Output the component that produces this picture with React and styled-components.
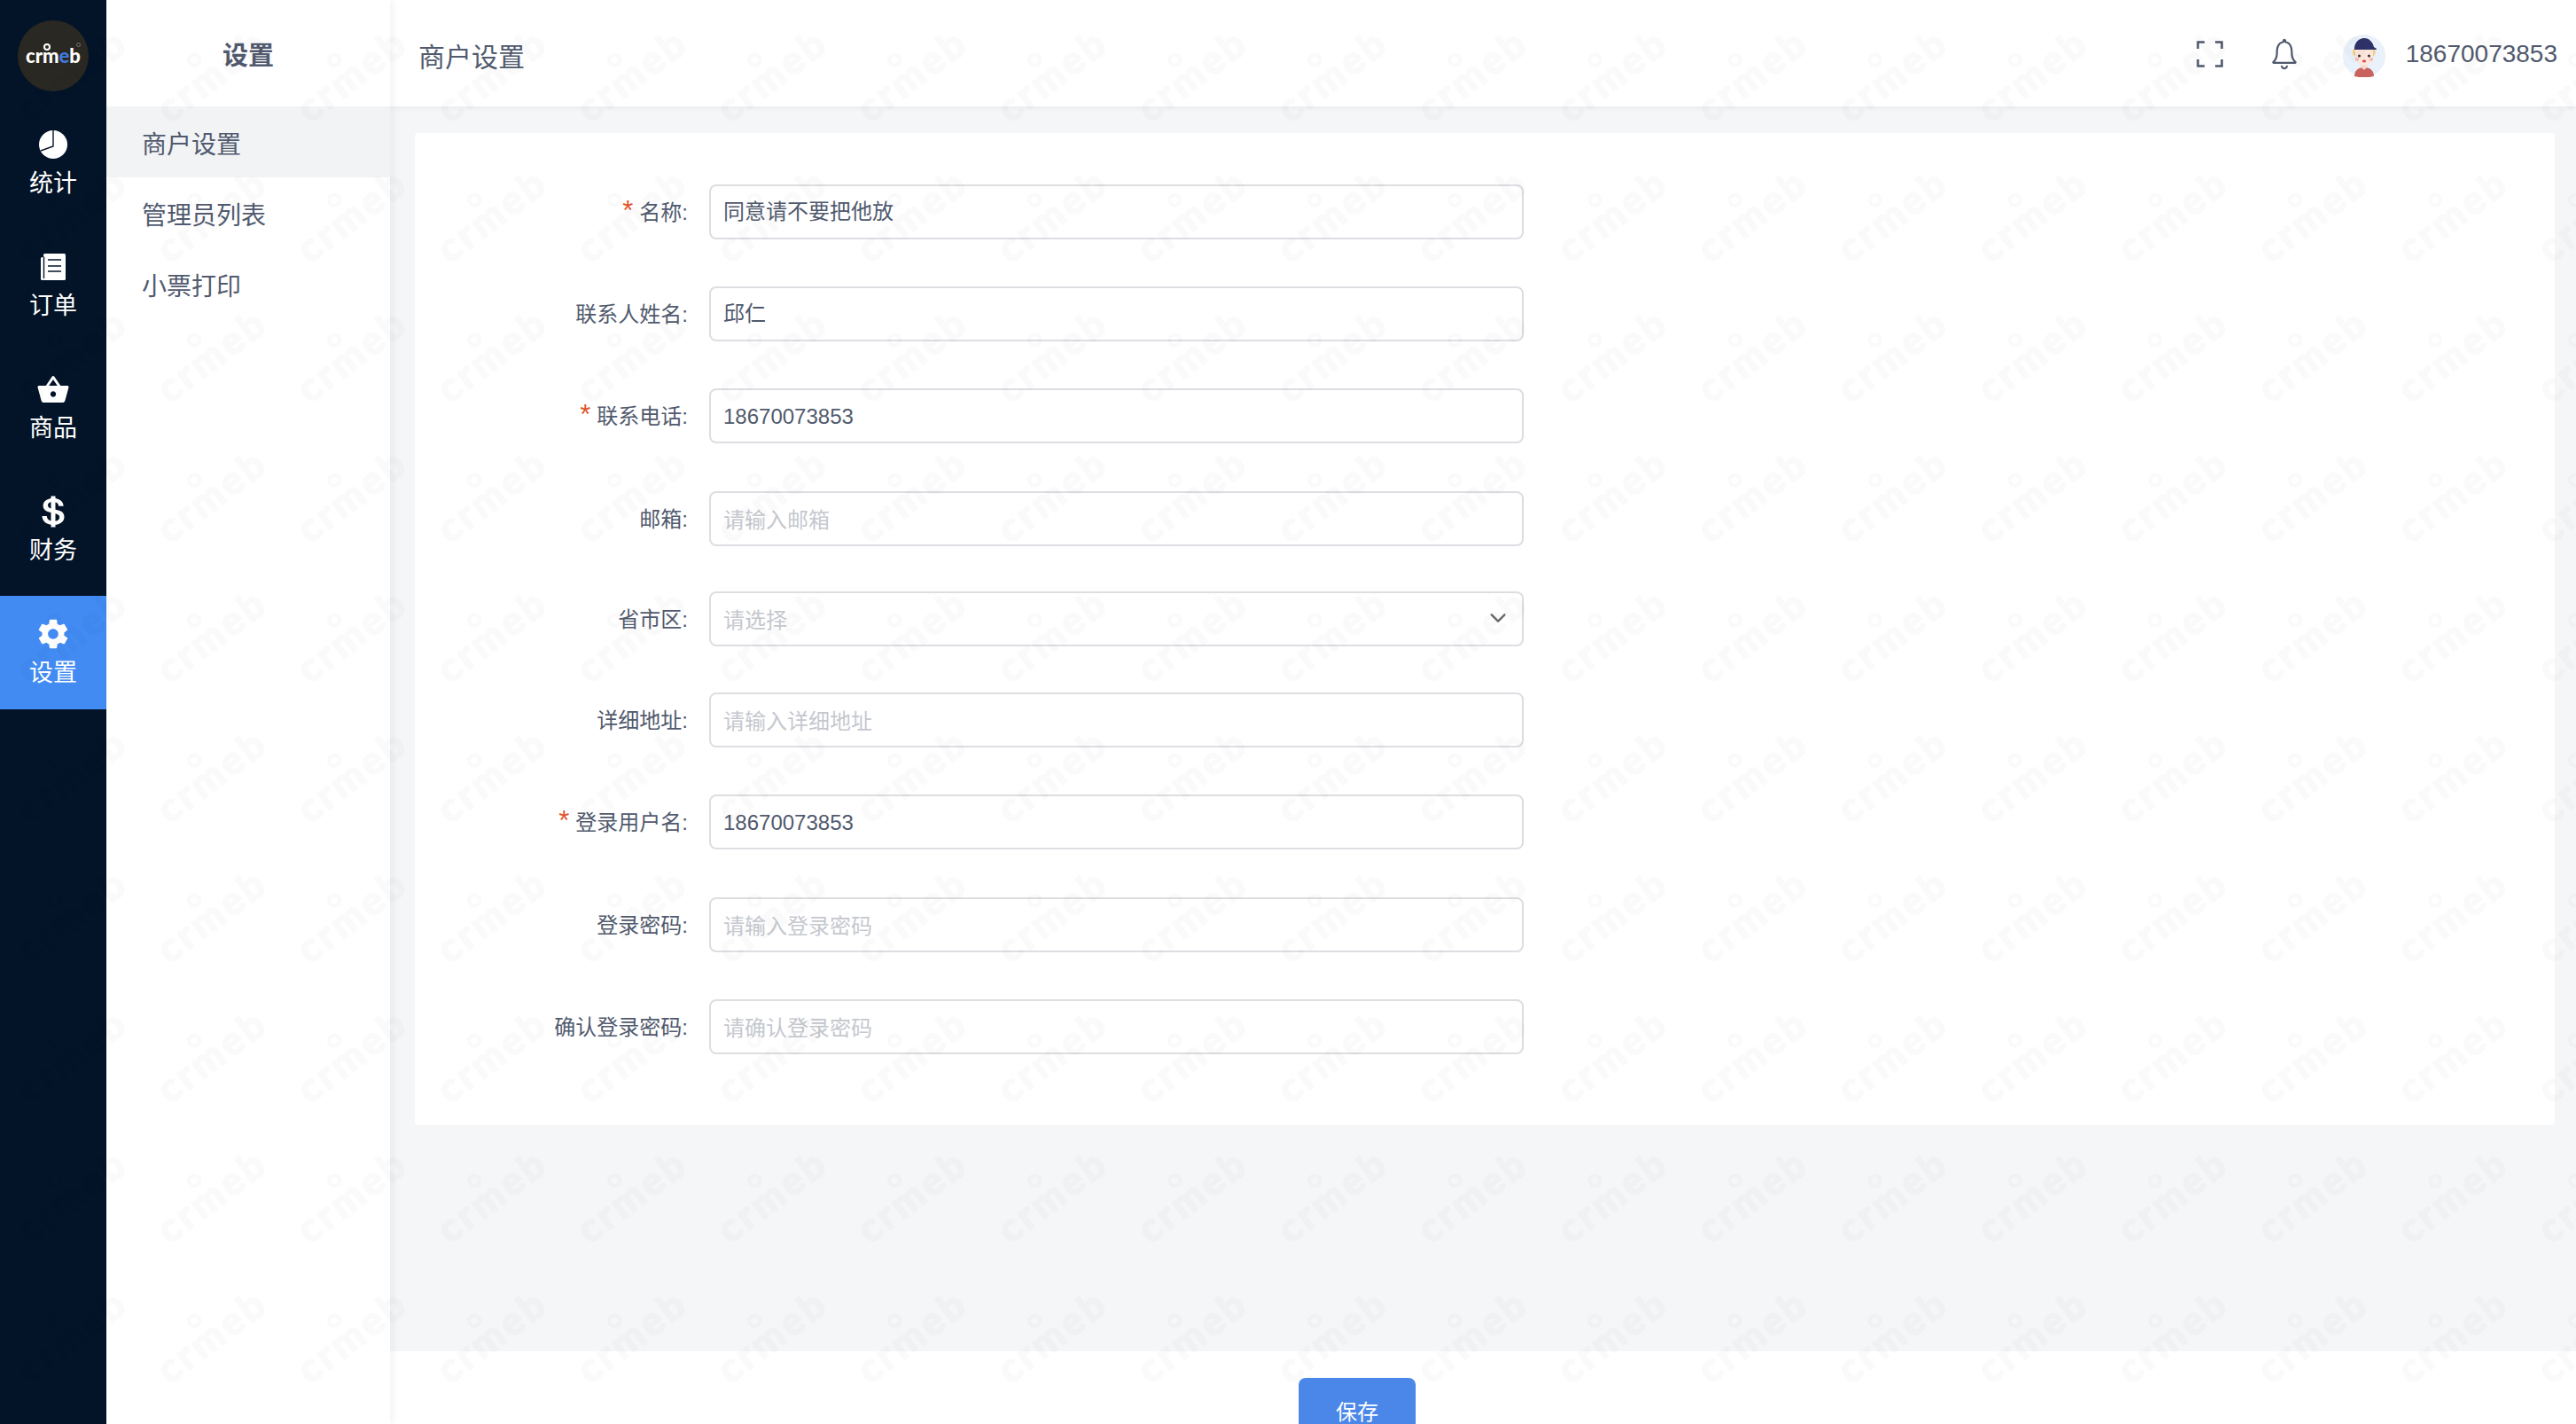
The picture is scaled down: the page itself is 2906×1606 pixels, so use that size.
import React from 'react';
import styled, { createGlobalStyle } from 'styled-components';
import { IoMdBasket, IoLogoUsd, IoMdSettings, IoIosNotificationsOutline, IoIosArrowDown } from 'react-icons/io';

const FONT = '"Liberation Sans", "Noto Sans CJK SC", sans-serif';

const Global = createGlobalStyle`
  html, body { margin: 0; padding: 0; height: 100%; overflow: hidden; }
  body { font-family: ${FONT}; color: #515a6e; background: #fff; }
  * { box-sizing: border-box; }
`;

const Page = styled.div`
  display: flex;
  width: 2906px;
  height: 1606px;
  overflow: hidden;
`;

const Rail = styled.nav`
  width: 120px;
  flex: none;
  background: #031428;
  display: flex;
  flex-direction: column;
`;

const LogoBox = styled.div`
  height: 120px;
  flex: none;
  padding: 23px 20px 0;
`;

const LogoCircle = styled.div`
  position: relative;
  width: 80px;
  height: 80px;
  border-radius: 50%;
  background: #2a2822;
  color: #fff;
  font: 900 22px/80px Lato, sans-serif;
  text-align: center;
  white-space: nowrap;
`;

const LogoBlue = styled.span`
  color: #3f7be0;
`;

const LogoRing = styled.i`
  position: absolute;
  left: 29px;
  top: 26px;
  width: 8px;
  height: 8px;
  border: 2px solid #fff;
  border-radius: 50%;
`;

const LogoMark = styled.i`
  position: absolute;
  left: 66px;
  top: 25px;
  width: 5px;
  height: 5px;
  border: 1px solid #77746c;
  border-radius: 50%;
`;

const RailList = styled.div`
  display: flex;
  flex-direction: column;
  gap: 10px;
`;

const RailItem = styled.div`
  height: 128px;
  display: flex;
  flex-direction: column;
  align-items: center;
  padding-top: 21px;
  color: #fff;
  background: ${p => (p.$active ? '#428bf3' : 'transparent')};
`;

const RailIcon = styled.div`
  height: 44px;
  display: flex;
  align-items: center;
  justify-content: center;
  font-size: 40px;
`;

const RailLabel = styled.div`
  font-size: 27px;
  line-height: 40px;
  margin-top: 2px;
`;

const SubPanel = styled.aside`
  width: 320px;
  flex: none;
  background: #fff;
  box-shadow: 3px 0 10px rgba(0, 0, 0, 0.05);
  position: relative;
  z-index: 2;
`;

const SubTitle = styled.div`
  height: 120px;
  display: flex;
  align-items: center;
  justify-content: center;
  font-size: 29px;
  font-weight: 600;
  color: #515a6e;
`;

const SubItem = styled.div`
  height: 80px;
  padding: 2px 0 0 40px;
  display: flex;
  align-items: center;
  font-size: 28px;
  color: #515a6e;
  background: ${p => (p.$active ? '#f1f3f5' : 'transparent')};
`;

const Main = styled.main`
  flex: 1;
  min-width: 0;
  display: flex;
  flex-direction: column;
  background: #f5f6f8;
`;

const TopBar = styled.header`
  height: 120px;
  flex: none;
  background: #fff;
  box-shadow: 0 2px 6px rgba(0, 0, 0, 0.05);
  display: flex;
  align-items: center;
  padding: 0 21px 0 32px;
`;

const PageTitle = styled.div`
  font-size: 30px;
  padding-top: 3px;
  color: #515a6e;
`;

const TopActions = styled.div`
  margin-left: auto;
  display: flex;
  align-items: center;
`;

const FullBtn = styled.svg`
  width: 30px;
  height: 30px;
  margin-right: 47px;
  margin-top: 2px;
`;

const Bell = styled.div`
  display: flex;
  font-size: 44px;
  margin-right: 44px;
  margin-top: 2px;
  color: #515a6e;
`;

const Avatar = styled.svg`
  width: 48px;
  height: 48px;
  margin-right: 23px;
  margin-top: 6px;
`;

const UserName = styled.div`
  font-size: 28px;
  margin-top: 2px;
`;

const Body = styled.div`
  flex: 1;
  min-height: 0;
  padding: 30px 24px 0 28px;
`;

const Card = styled.section`
  background: #fff;
  height: 1119px;
  border-radius: 4px;
  padding-top: 58px;
  display: flex;
  flex-direction: column;
`;

const Row = styled.div`
  display: flex;
  align-items: center;
  height: 62px;
  margin-top: ${p => p.$gap}px;
`;

const Label = styled.label`
  width: 308px;
  margin: 0 24px 3px 0;
  text-align: right;
  font-size: 24px;
  color: #515a6e;
`;

const Star = styled.span`
  color: #e0552d;
  font-size: 31px;
  line-height: 20px;
  margin-right: 7px;
`;

const fieldShift = {
  text: '0 14px 6px',
  digits: '2px 14px 0',
  empty: '4px 14px 0',
};

const Field = styled.input`
  width: 919px;
  height: 62px;
  border: 2px solid #dcdee2;
  border-radius: 8px;
  background: transparent;
  padding: ${p => fieldShift[p.$kind]};
  font: 24px ${FONT};
  color: #515a6e;
  outline: none;
  &::placeholder { color: #c5c8ce; opacity: 1; }
`;

const Picker = styled.div`
  width: 919px;
  height: 62px;
  border: 2px solid #dcdee2;
  border-radius: 8px;
  padding: 0 14px 2px;
  display: flex;
  align-items: center;
  justify-content: space-between;
  font-size: 24px;
  color: #c5c8ce;
`;

const PickerArrow = styled.div`
  display: flex;
  font-size: 26px;
  color: #6a6a6a;
`;

const Footer = styled.footer`
  height: 82px;
  flex: none;
  background: #fff;
  padding: 30px 0 0 1025px;
  overflow: hidden;
`;

const SaveBtn = styled.button`
  width: 132px;
  height: 72px;
  border: 0;
  border-radius: 8px;
  background: #4a87e8;
  color: #fff;
  font: 24px ${FONT};
`;

const Watermark = styled.svg`
  position: fixed;
  left: 0;
  top: 0;
  width: 2906px;
  height: 1606px;
  pointer-events: none;
  z-index: 10;
`;

const fields = [
  { label: '名称', required: true, value: '同意请不要把他放', kind: 'text', gap: 0 },
  { label: '联系人姓名', value: '邱仁', kind: 'text', gap: 53 },
  { label: '联系电话', required: true, value: '18670073853', kind: 'digits', gap: 53 },
  { label: '邮箱', placeholder: '请输入邮箱', kind: 'empty', gap: 54 },
  { label: '省市区', select: '请选择', gap: 51 },
  { label: '详细地址', placeholder: '请输入详细地址', kind: 'empty', gap: 52 },
  { label: '登录用户名', required: true, value: '18670073853', kind: 'digits', gap: 53 },
  { label: '登录密码', placeholder: '请输入登录密码', kind: 'empty', gap: 54 },
  { label: '确认登录密码', placeholder: '请确认登录密码', kind: 'empty', gap: 53 },
];

const PieIcon = () => (
  <svg width="32" height="32" viewBox="0 0 32 32">
    <circle cx="16" cy="16" r="16" fill="#fff" />
    <path d="M16 0v18L2 23" fill="none" stroke="#031428" strokeWidth="1.400" />
  </svg>
);

const PaperIcon = () => (
  <svg width="28" height="30" viewBox="0 0 28 30">
    <rect x="3" y="0" width="25" height="30" rx="1.500" fill="#fff" />
    <rect x="0" y="4" width="4" height="26" rx="1.500" fill="#fff" />
    <path d="M3.500 3.500V28M8 7h15M8 14h15M8 20h15" stroke="#031428" strokeWidth="1.400" fill="none" />
  </svg>
);

const rail = [
  { label: '统计', icon: <PieIcon /> },
  { label: '订单', icon: <PaperIcon /> },
  { label: '商品', icon: <IoMdBasket /> },
  { label: '财务', icon: <IoLogoUsd /> },
  { label: '设置', icon: <IoMdSettings />, active: true },
];

const AvatarArt = () => (
  <Avatar viewBox="0 0 48 48">
    <circle cx="24" cy="24" r="24" fill="#e9f1fa" />
    <path d="M13 47c0-6 4-10 11-10s11 4 11 10c-3 1-7 1-11 1s-8 0-11-1z" fill="#c9635d" />
    <path d="M20 36l4 4 4-4-1-3h-6z" fill="#f7d9cc" />
    <path d="M12 16c-2 3-1 7 2 9h20c3-2 3-6 2-9z" fill="#f1cf8a" />
    <path d="M14 16h20v8c0 6-4 11-10 11s-10-5-10-11z" fill="#fce5da" />
    <path d="M13 16c0-7 5-12 11-12s10 5 11 10l3 2c0 1 0 1-1 1H13z" fill="#2e3268" />
    <circle cx="18.500" cy="24" r="1.500" fill="#333" />
    <circle cx="29.500" cy="24" r="1.500" fill="#333" />
    <circle cx="16" cy="28" r="2" fill="#f7b9b0" />
    <circle cx="32" cy="28" r="2" fill="#f7b9b0" />
    <ellipse cx="24" cy="30" rx="2.200" ry="1.400" fill="#d9534f" />
  </Avatar>
);

export default function App() {
  return (
    <>
      <Global />
      <Page>
        <Rail>
          <LogoBox>
            <LogoCircle>
              crm<LogoBlue>e</LogoBlue>b
              <LogoRing />
              <LogoMark />
            </LogoCircle>
          </LogoBox>
          <RailList>
            {rail.map(({ label, icon, active }) => (
              <RailItem key={label} $active={active}>
                <RailIcon>{icon}</RailIcon>
                <RailLabel>{label}</RailLabel>
              </RailItem>
            ))}
          </RailList>
        </Rail>
        <SubPanel>
          <SubTitle>设置</SubTitle>
          <SubItem $active>商户设置</SubItem>
          <SubItem>管理员列表</SubItem>
          <SubItem>小票打印</SubItem>
        </SubPanel>
        <Main>
          <TopBar>
            <PageTitle>商户设置</PageTitle>
            <TopActions>
              <FullBtn viewBox="0 0 30 30" fill="none" stroke="#515a6e" strokeWidth="2.600">
                <path d="M1.500 9V1.500H9M21 1.500h7.500V9M28.500 21v7.500H21M9 28.500H1.500V21" />
              </FullBtn>
              <Bell><IoIosNotificationsOutline /></Bell>
              <AvatarArt />
              <UserName>18670073853</UserName>
            </TopActions>
          </TopBar>
          <Body>
            <Card>
              {fields.map(f => (
                <Row key={f.label} $gap={f.gap}>
                  <Label>
                    {f.required && <Star>*</Star>}
                    {f.label}:
                  </Label>
                  {f.select ? (
                    <Picker>
                      {f.select}
                      <PickerArrow><IoIosArrowDown /></PickerArrow>
                    </Picker>
                  ) : (
                    <Field $kind={f.kind} defaultValue={f.value} placeholder={f.placeholder} />
                  )}
                </Row>
              ))}
            </Card>
          </Body>
          <Footer>
            <SaveBtn>保存</SaveBtn>
          </Footer>
        </Main>
      </Page>
      <Watermark aria-hidden="true">
        <defs>
          <pattern id="wm" width="158" height="158" patternUnits="userSpaceOnUse">
            <g transform="translate(81 84) rotate(-37)" opacity="0.02">
              <text textAnchor="middle" y="16" fontFamily="Lato, sans-serif" fontWeight="700" fontSize="44" letterSpacing="4" fill="#000" stroke="#000" strokeWidth="2" strokeLinejoin="round">crmeb</text>
              <circle cx="-6" cy="-25" r="6" fill="none" stroke="#000" strokeWidth="4" />
            </g>
          </pattern>
        </defs>
        <rect width="2906" height="1606" fill="url(#wm)" />
      </Watermark>
    </>
  );
}
